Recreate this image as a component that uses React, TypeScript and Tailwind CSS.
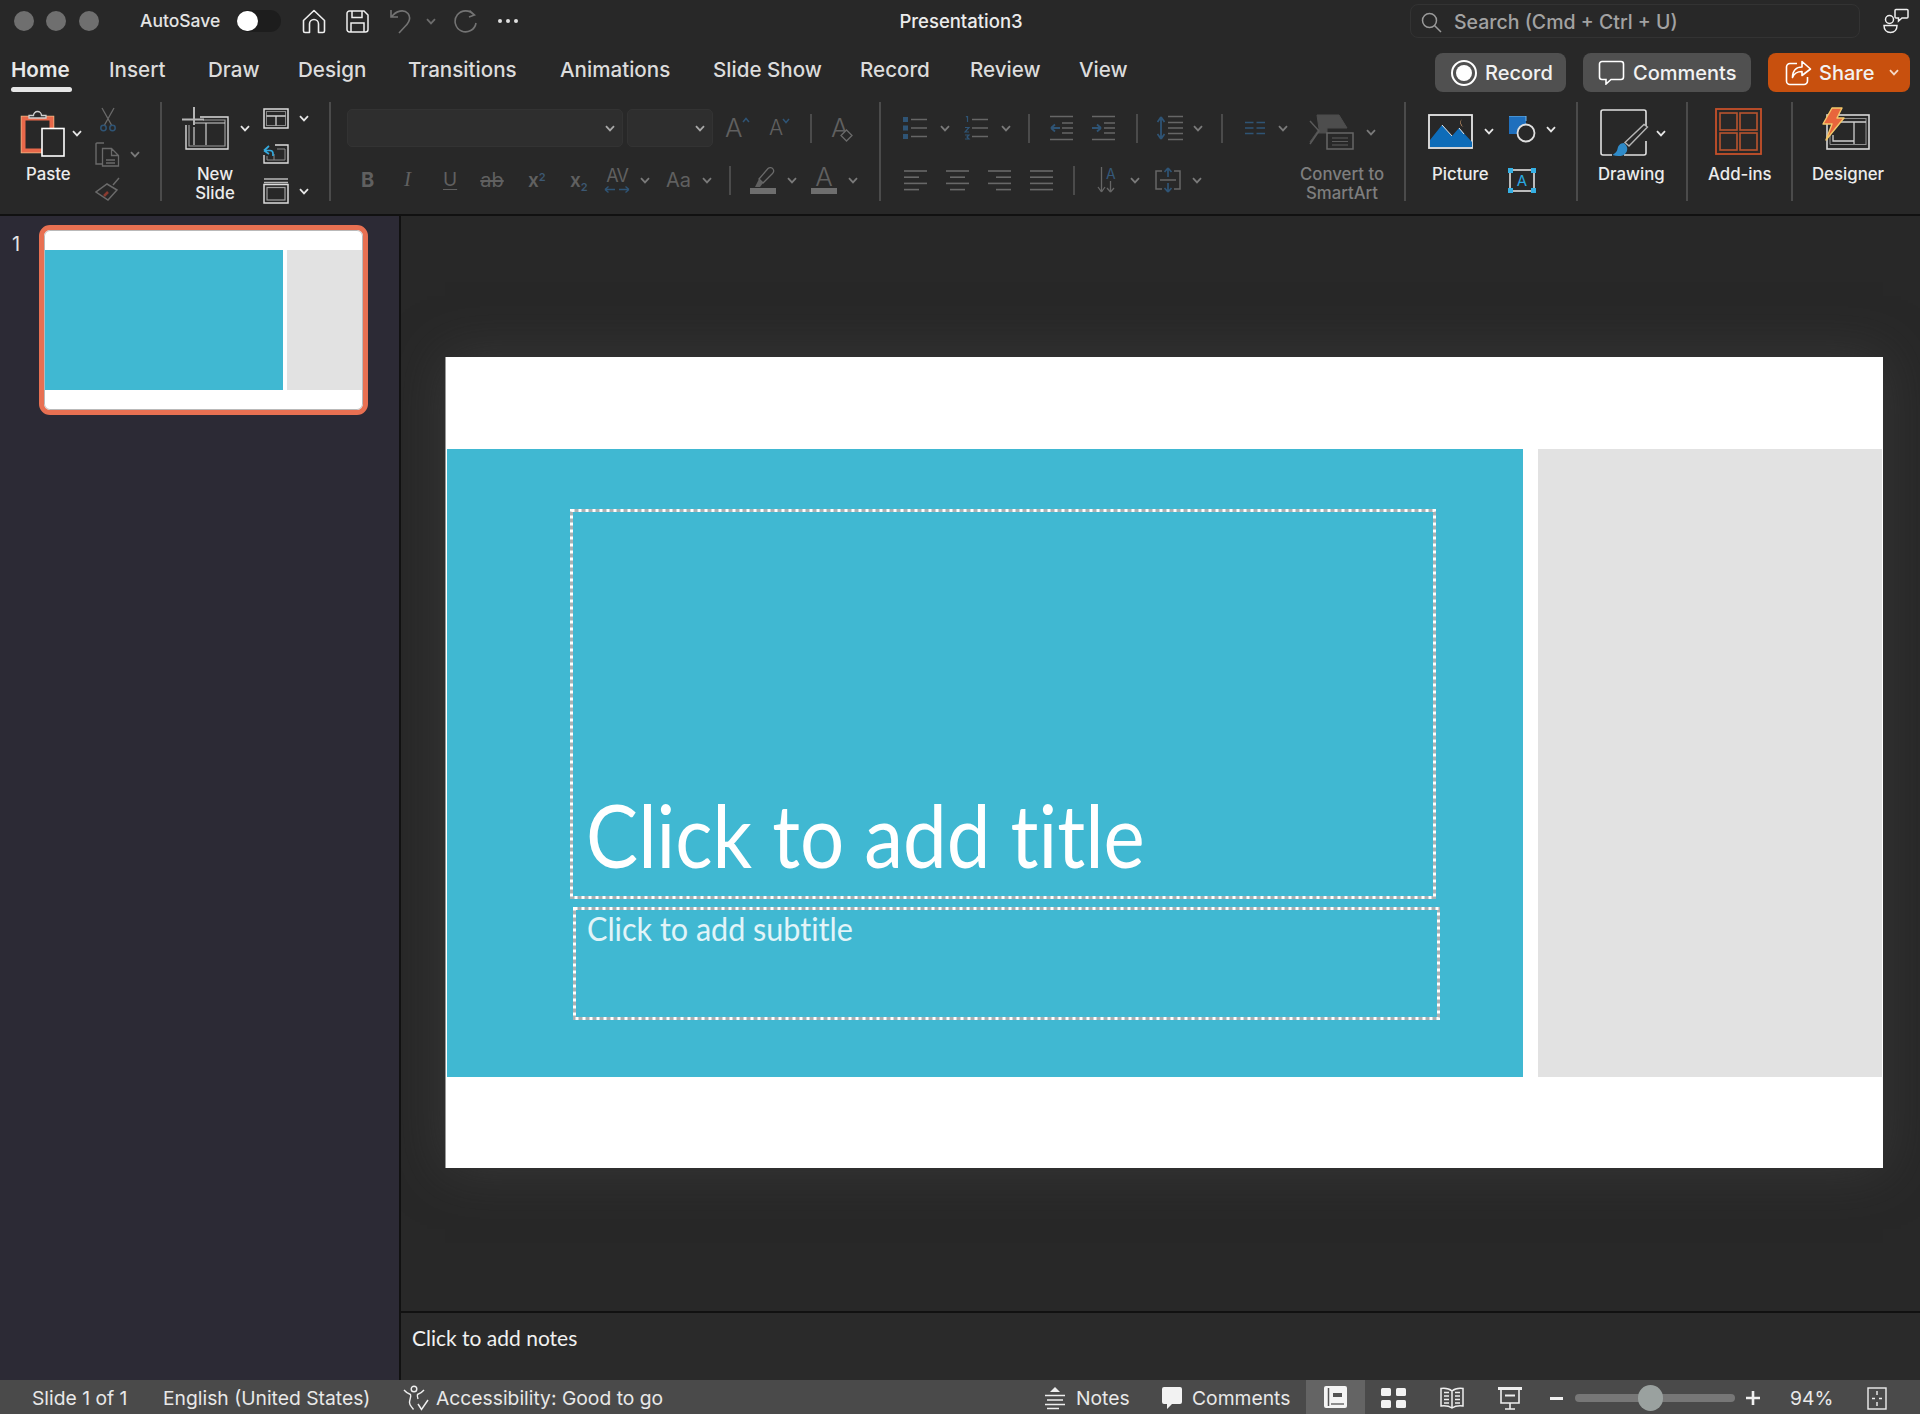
import type { ReactNode } from "react"

function S({ w, h, className = "", children }: { w: number; h: number; className?: string; children: ReactNode }) {
  return (
    <svg width={w} height={h} viewBox={`0 0 ${w} ${h}`} fill="none" className={`block shrink-0 ${className}`}>
      {children}
    </svg>
  )
}

function Chev({ color = "#e6e6e6", className = "" }: { color?: string; className?: string }) {
  return (
    <S w={10} h={7} className={className}>
      <path d="M1 1.2 5 5.4 9 1.2" stroke={color} strokeWidth="1.8" />
    </S>
  )
}

const DIM = "#6a6a6a"
const BLUE = "#2f5475"

function Sep() {
  return <div className="w-[2px] h-[99px] mt-[2px] bg-[#4b4b4b] shrink-0" />
}

function MiniSep({ className = "" }: { className?: string }) {
  return <div className={`w-[2px] h-[29px] bg-[#4b4b4b] shrink-0 ${className}`} />
}

function Lines({ rows, w = 23 }: { rows: [number, number][]; w?: number }) {
  return (
    <S w={w} h={23}>
      {rows.map(([a, b], i) => (
        <path key={i} d={`M${a} ${2 + i * 6.2}H${b}`} stroke="#686868" strokeWidth="1.6" />
      ))}
    </S>
  )
}

function Dashed({ className = "", children }: { className?: string; children?: ReactNode }) {
  return (
    <div className={`relative ${className}`}>
      <svg className="absolute inset-0 w-full h-full overflow-visible" fill="none">
        <rect x="1.5" y="1.5" stroke="#a9b0b3" strokeWidth="3" className="[width:calc(100%-3px)] [height:calc(100%-3px)]" />
        <rect x="1.5" y="1.5" stroke="#ffffff" strokeWidth="3" strokeDasharray="3 4" className="[width:calc(100%-3px)] [height:calc(100%-3px)]" />
      </svg>
      {children}
    </div>
  )
}

const tabs = [
  { t: "Home", c: "w-[60px] ml-[11px] font-semibold text-[#e9e9e9]" },
  { t: "Insert", c: "w-[58px] ml-[38px]" },
  { t: "Draw", c: "w-[50px] ml-[41px]" },
  { t: "Design", c: "w-[68px] ml-[40px]" },
  { t: "Transitions", c: "w-[108px] ml-[42px]" },
  { t: "Animations", c: "w-[111px] ml-[44px]" },
  { t: "Slide Show", c: "w-[108px] ml-[42px]" },
  { t: "Record", c: "w-[71px] ml-[39px]" },
  { t: "Review", c: "w-[70px] ml-[39px]" },
  { t: "View", c: "w-[48px] ml-[39px]" },
]

function TitleBar() {
  return (
    <div className="flex items-center h-[42px] mb-[4px] text-[#e4e4e4]">
      <div className="ml-[14px] w-[20px] h-[20px] rounded-full bg-[#6f6f6f]" />
      <div className="ml-[12px] w-[20px] h-[20px] rounded-full bg-[#6f6f6f]" />
      <div className="ml-[13px] w-[20px] h-[20px] rounded-full bg-[#6f6f6f]" />
      <span className="ml-[41px] w-[80px] text-[17.5px] font-medium whitespace-nowrap">AutoSave</span>
      <div className="ml-[17px] w-[44px] h-[22px] rounded-full bg-[#1d1d1d] flex items-center">
        <div className="w-[21px] h-[20px] rounded-full bg-white" />
      </div>
      <S w={24} h={25} className="ml-[21px]">
        <path d="M1.5 11.5 12 1.5l10.5 10V22a1.5 1.5 0 0 1-1.5 1.5h-4.5V15a4.5 4.5 0 0 0-9 0v8.5H3A1.5 1.5 0 0 1 1.5 22Z" stroke="#eee" strokeWidth="1.6" strokeLinejoin="round" />
      </S>
      <S w={23} h={23} className="ml-[20px]">
        <path d="M1 3.5A2.5 2.5 0 0 1 3.500 1H18l4 4v14.500A2.500 2.500 0 0 1 19.500 22h-16A2.500 2.500 0 0 1 1 19.500Z" stroke="#eee" strokeWidth="1.500" />
        <path d="M6 1v6.500h10V1M5 22v-9h13v9" stroke="#eee" strokeWidth="1.500" />
      </S>
      <S w={22} h={26} className="ml-[21px]">
        <path d="M1 2v7h7M1.500 9C6 2.500 14 1 18 5.500c3.500 4.500 1 9-3 13l-6 6.500" stroke="#737373" strokeWidth="1.600" />
      </S>
      <Chev color="#6c6c6c" className="ml-[14px]" />
      <S w={23} h={25} className="ml-[18px]">
        <path d="M20 6A10.500 10.500 0 1 0 22 14M15.500 1.500l5 4.500-5.500 2" stroke="#737373" strokeWidth="1.600" />
      </S>
      <div className="ml-[21px] flex gap-[4px]">
        <div className="w-[4px] h-[4px] rounded-full bg-[#e0e0e0]" />
        <div className="w-[4px] h-[4px] rounded-full bg-[#e0e0e0]" />
        <div className="w-[4px] h-[4px] rounded-full bg-[#e0e0e0]" />
      </div>
      <span className="ml-[380px] mt-[2px] w-[126px] text-center text-[18.5px] font-medium whitespace-nowrap text-[#ececec]">Presentation3</span>
      <div className="ml-[386px] w-[450px] h-[34px] rounded-[8px] border border-[#333] flex items-center">
        <S w={21} h={21} className="ml-[10px] mt-[2px]">
          <circle cx="8.500" cy="8.500" r="7" stroke="#9a9a9a" strokeWidth="1.500" />
          <path d="m13.500 13.500 6.500 6.500" stroke="#9a9a9a" strokeWidth="1.500" />
        </S>
        <span className="ml-[12px] mt-[3px] text-[19.5px] font-medium text-[#a2a2a2] whitespace-nowrap">Search (Cmd + Ctrl + U)</span>
      </div>
      <S w={26} h={26} className="ml-[23px]">
        <circle cx="6.500" cy="11.500" r="4" stroke="#eee" strokeWidth="1.500" />
        <path d="M1 17.500h13c0 4-2.500 7-6.500 7s-6.500-3-6.500-7Z" stroke="#eee" strokeWidth="1.500" />
        <path d="M13 1.500h11a1 1 0 0 1 1 1v6.500a1 1 0 0 1-1 1h-5l-3.500 3v-3H13a1 1 0 0 1-1-1V2.500a1 1 0 0 1 1-1Z" stroke="#eee" strokeWidth="1.500" />
      </S>
    </div>
  )
}

function TabRow() {
  return (
    <div className="flex h-[54px] text-[20.6px] font-medium text-[#dcdcdc]">
      {tabs.map((tab) => (
        <div key={tab.t} className={`mt-[11px] whitespace-nowrap leading-[26px] h-[26px] ${tab.c}`}>
          {tab.t}
          {tab.t === "Home" && <div className="mt-[4px] h-[5px] w-[61px] rounded-full bg-[#e6e6e6]" />}
        </div>
      ))}
      <div className="ml-auto mt-[7px] mr-[10px] flex gap-[17px] h-[39px] text-[20px] text-[#f2f2f2]">
        <div className="w-[131px] rounded-[8px] bg-[#505050] flex items-center">
          <div className="ml-[16px] w-[26px] h-[26px] rounded-full border-2 border-white flex items-center justify-center">
            <div className="w-[16px] h-[16px] rounded-full bg-white" />
          </div>
          <span className="ml-[8px]">Record</span>
        </div>
        <div className="w-[168px] rounded-[8px] bg-[#505050] flex items-center">
          <S w={27} h={25} className="ml-[15px]">
            <path d="M4 1.500h19A2.500 2.500 0 0 1 25.500 4v13a2.500 2.500 0 0 1-2.500 2.500H13l-5 4.500v-4.500H4A2.500 2.500 0 0 1 1.500 17V4A2.500 2.500 0 0 1 4 1.500Z" stroke="#fff" strokeWidth="1.600" />
          </S>
          <span className="ml-[8px]">Comments</span>
        </div>
        <div className="w-[142px] rounded-[8px] bg-[#c8500e] flex items-center">
          <S w={27} h={26} className="ml-[17px]">
            <path d="M12 3.500H5A3.500 3.500 0 0 0 1.500 7v14A3.500 3.500 0 0 0 5 24.500h14a3.500 3.500 0 0 0 3.500-3.500v-4" stroke="#fff" strokeWidth="1.600" />
            <path d="M17 1.500 25.500 9 17 15.500V11.500c-5 0-8 2-9.500 6 0-7 4-10.500 9.500-10.500Z" stroke="#fff" strokeWidth="1.600" strokeLinejoin="round" />
          </S>
          <span className="ml-[7px]">Share</span>
          <Chev color="#f5d9c8" className="ml-[14px] w-[12px]" />
        </div>
      </div>
    </div>
  )
}

function Label({ className = "", children }: { className?: string; children: ReactNode }) {
  return <div className={`text-[16.8px] leading-[19px] font-medium text-[#ececec] whitespace-nowrap ${className}`}>{children}</div>
}

function ClipboardGroup() {
  return (
    <div className="flex w-[160px] shrink-0">
      <div className="w-[90px]">
        <div className="flex items-center mt-[10px] ml-[20px]">
          <S w={45} h={47}>
            <rect x="1.500" y="6.500" width="32" height="36" stroke="#f0bb86" strokeWidth="1.500" />
            <rect x="3.500" y="8.500" width="28" height="32" stroke="#e8684a" strokeWidth="4" />
            <path d="M9 8V5.500h4.500a4 4 0 0 1 8 0H26V8Z" fill="#282828" stroke="#cfcfcf" strokeWidth="1.300" />
            <rect x="22" y="18.500" width="22" height="27.500" fill="#282828" stroke="#fff" strokeWidth="1.600" />
          </S>
          <Chev className="ml-[7px]" />
        </div>
        <Label className="ml-[26px] mt-[8px]">Paste</Label>
      </div>
      <div className="ml-[5px]">
        <S w={16} h={25} className="ml-[5px] mt-[7px]">
          <path d="M2 1 11.500 18M14 1 4.500 18" stroke={DIM} strokeWidth="1.300" />
          <circle cx="3.500" cy="21" r="2.700" stroke={BLUE} strokeWidth="1.500" />
          <circle cx="12.500" cy="21" r="2.700" stroke={BLUE} strokeWidth="1.500" />
        </S>
        <div className="flex items-center mt-[10px]">
          <S w={25} h={25}>
            <path d="M9 1H2a1 1 0 0 0-1 1v20h6" stroke={DIM} strokeWidth="1.400" />
            <path d="M7.500 6.500h9l7 7v10.500h-16ZM16.500 6.500v7h7M11 18h9M11 21h9" stroke={DIM} strokeWidth="1.300" />
          </S>
          <Chev color="#7a7a7a" className="ml-[10px]" />
        </div>
        <S w={25} h={24} className="mt-[10px]">
          <path d="M24 1l-6 7M12 7l10 6-9 10L1 15Z" stroke={DIM} strokeWidth="1.500" />
          <path d="M9 19l4-4" stroke="#8a3b30" strokeWidth="2.500" />
        </S>
      </div>
    </div>
  )
}

function SlidesGroup() {
  return (
    <div className="flex w-[167px] shrink-0">
      <div className="w-[94px]">
        <div className="flex items-center mt-[7px] ml-[20px]">
          <S w={47} h={43}>
            <path d="M18 10H46V42H4V18" stroke="#dadada" strokeWidth="1.400" />
            <path d="M7 18V39H43V13H21M7 23" stroke="#9b9b9b" strokeWidth="1.200" />
            <path d="M24 16V38M12 20V38M12 16H43" stroke="#cfcfcf" strokeWidth="1.200" />
            <path d="M12 0V18M0 12.500H22" stroke="#b5b5b5" strokeWidth="2" />
          </S>
          <Chev className="ml-[11px]" />
        </div>
        <Label className="ml-[20px] w-[66px] mt-[15px] text-center">
          New
          <br />
          Slide
        </Label>
      </div>
      <div className="ml-[7px]">
        <div className="flex items-center mt-[8px]">
          <S w={26} h={21}>
            <rect x="1" y="1" width="24" height="19" stroke="#dcdcdc" strokeWidth="1.500" />
            <rect x="3.500" y="3.500" width="19" height="14" stroke="#888" strokeWidth="1" />
            <path d="M3.500 8H22.500M13 8V17.500" stroke="#d0d0d0" strokeWidth="1.300" />
          </S>
          <Chev className="ml-[10px]" />
        </div>
        <S w={26} h={21} className="mt-[14px]">
          <path d="M12 2H25V20H1V12" stroke="#dcdcdc" strokeWidth="1.400" />
          <path d="M14 6H22V17H4V13M11 11V17" stroke="#8b8b8b" strokeWidth="1" />
          <path d="M1 7.500 6 3M1 7.500 6 11M1.500 7.500H7a3 3 0 0 1 3 3V13" stroke="#35a9dc" strokeWidth="1.700" />
        </S>
        <div className="flex items-center mt-[14px]">
          <S w={26} h={26}>
            <path d="M1 1H25M1 4.500H25" stroke="#b8b8b8" strokeWidth="1.500" />
            <rect x="1" y="6.500" width="24" height="18.500" stroke="#dcdcdc" strokeWidth="1.500" />
            <rect x="4" y="9.500" width="18" height="12.500" stroke="#a0a0a0" strokeWidth="1.200" />
          </S>
          <Chev className="ml-[10px]" />
        </div>
      </div>
    </div>
  )
}

function FontGroup() {
  return (
    <div className="w-[548px] shrink-0 mt-[9px] text-[#606060]">
      <div className="flex items-center h-[38px]">
        <div className="ml-[16px] w-[276px] h-[38px] rounded-[5px] bg-[#2e2e2e] border border-[#333] flex items-center justify-end pr-[7px]">
          <Chev color="#a8a8a8" />
        </div>
        <div className="ml-[4px] w-[86px] h-[38px] rounded-[5px] bg-[#2e2e2e] border border-[#333] flex items-center justify-end pr-[7px]">
          <Chev color="#a8a8a8" />
        </div>
        <div className="ml-[12px] w-[24px] flex items-start">
          <span className="text-[26px] leading-[30px] font-light">A</span>
          <S w={8} h={6} className="-ml-[1px] mt-[4px]"><path d="M1 5 4 1.500 7 5" stroke={BLUE} strokeWidth="1.500" /></S>
        </div>
        <div className="ml-[20px] w-[22px] flex items-start">
          <span className="text-[21px] leading-[30px] font-light">A</span>
          <S w={8} h={6} className="-ml-[1px] mt-[5px]"><path d="M1 1 4 4.500 7 1" stroke={BLUE} strokeWidth="1.500" /></S>
        </div>
        <MiniSep className="ml-[19px]" />
        <div className="ml-[19px] w-[25px] flex items-start">
          <span className="text-[26px] leading-[30px] font-light">A</span>
          <S w={13} h={13} className="-ml-[9px] mt-[16px]"><path d="M6.500 1 12 6.500 6.500 12 1 6.500Z" stroke="#6a6a6a" strokeWidth="1.300" fill="#282828" /></S>
        </div>
      </div>
      <div className="flex items-center h-[38px] mt-[14px]">
        <span className="ml-[30px] w-[11px] text-[20px] font-bold">B</span>
        <span className="ml-[32px] w-[9px] text-[21px] italic font-['Liberation_Serif',serif]">I</span>
        <span className="ml-[30px] w-[13px] text-[19px] underline underline-offset-[3px]">U</span>
        <span className="ml-[24px] w-[24px] text-[20px] text-center line-through">ab</span>
        <span className="ml-[24px] w-[17px] text-[19px] font-semibold leading-none">x<sup className="text-[11px] text-[#3c5873] -top-[6px]">2</sup></span>
        <span className="ml-[25px] w-[18px] text-[19px] font-semibold leading-none">x<sub className="text-[11px] text-[#3c5873] -bottom-[4px]">2</sub></span>
        <div className="ml-[16px] w-[26px] flex flex-col items-center">
          <span className="text-[18px] leading-[19px] tracking-[-1px]">AV</span>
          <S w={26} h={9}><path d="M1 4.500H11M1 4.500 4.500 1.500M1 4.500 4.500 7.500M15 4.500H25M25 4.500 21.500 1.500M25 4.500 21.500 7.500" stroke={BLUE} strokeWidth="1.400" /></S>
        </div>
        <Chev color="#7a7a7a" className="ml-[10px]" />
        <span className="ml-[16px] w-[26px] text-[20px]">Aa</span>
        <Chev color="#7a7a7a" className="ml-[10px]" />
        <MiniSep className="ml-[17px]" />
        <S w={26} h={28} className="ml-[19px]">
          <path d="M9 13 18 2.500c1.500-1.500 4-1 5 .5s1 3-.5 4.500L13 17Z" stroke="#6a6a6a" strokeWidth="1.300" />
          <path d="M9 13 5 21h5l3-4Z" fill="#606060" />
          <rect x="0" y="22" width="26" height="6" fill="#6e6e6e" />
        </S>
        <Chev color="#7a7a7a" className="ml-[11px]" />
        <div className="ml-[14px] w-[26px] h-[28px] flex flex-col items-center">
          <span className="text-[26px] leading-[22px] font-light">A</span>
          <div className="w-[26px] h-[6px] bg-[#6e6e6e] mt-auto" />
        </div>
        <Chev color="#7a7a7a" className="ml-[11px]" />
      </div>
    </div>
  )
}

function ParagraphGroup() {
  return (
    <div className="flex w-[523px] shrink-0">
      <div className="w-[419px] mt-[9px]">
        <div className="flex items-center h-[38px]">
          <S w={24} h={24} className="ml-[22px]">
            <rect x="0" y="1" width="5" height="5" fill={BLUE} /><rect x="0" y="9.500" width="5" height="5" fill={BLUE} /><rect x="0" y="18" width="5" height="5" fill={BLUE} />
            <path d="M8 3.500H24M8 12H24M8 20.500H24" stroke="#666" strokeWidth="1.500" />
          </S>
          <Chev color="#7a7a7a" className="ml-[13px]" />
          <S w={24} h={24} className="ml-[14px]">
            <path d="M2 1 3.500 0V6M1 11.500H5L1 16H5M1 19H5L3 21 5 23H1" stroke={BLUE} strokeWidth="1.200" />
            <path d="M8 3.500H24M8 12H24M8 20.500H24" stroke="#666" strokeWidth="1.500" />
          </S>
          <Chev color="#7a7a7a" className="ml-[13px]" />
          <MiniSep className="ml-[17px]" />
          <S w={23} h={26} className="ml-[20px]">
            <path d="M0 1.500H23M12 8H23M12 13H23M12 18H23M0 24.500H23" stroke="#666" strokeWidth="1.500" />
            <path d="M10 13H1M1 13 5 9.500M1 13 5 16.500" stroke={BLUE} strokeWidth="1.800" />
          </S>
          <S w={23} h={26} className="ml-[19px]">
            <path d="M0 1.500H23M12 8H23M12 13H23M12 18H23M0 24.500H23" stroke="#666" strokeWidth="1.500" />
            <path d="M0 13H9M9 13 5 9.500M9 13 5 16.500" stroke={BLUE} strokeWidth="1.800" />
          </S>
          <MiniSep className="ml-[21px]" />
          <S w={26} h={26} className="ml-[19px]">
            <path d="M4 2V24M4 2 .5 7M4 2 7.500 7M4 24 .5 19M4 24 7.500 19" stroke={BLUE} strokeWidth="1.800" />
            <path d="M11 1.500H26M11 7.500H26M11 13H26M11 18.500H26M11 24.500H26" stroke="#666" strokeWidth="1.500" />
          </S>
          <Chev color="#7a7a7a" className="ml-[10px]" />
          <MiniSep className="ml-[18px]" />
          <S w={20} h={14} className="ml-[22px]">
            <path d="M0 1.500H8.500M11.500 1.500H20M0 7H8.500M11.500 7H20M0 12.500H8.500M11.500 12.500H20" stroke={BLUE} strokeWidth="1.700" />
          </S>
          <Chev color="#7a7a7a" className="ml-[13px]" />
        </div>
        <div className="flex items-center h-[38px] mt-[14px]">
          <div className="ml-[23px]"><Lines rows={[[0, 23], [0, 15], [0, 23], [0, 15]]} /></div>
          <div className="ml-[19px]"><Lines rows={[[0, 23], [4, 19], [0, 23], [4, 19]]} /></div>
          <div className="ml-[19px]"><Lines rows={[[0, 23], [8, 23], [0, 23], [8, 23]]} /></div>
          <div className="ml-[19px]"><Lines rows={[[0, 23], [0, 23], [0, 23], [0, 23]]} /></div>
          <MiniSep className="ml-[20px]" />
          <div className="ml-[22px] w-[21px] h-[26px] flex">
            <S w={9} h={26}><path d="M4.500 0V25M4.500 25 1 20M4.500 25 8 20" stroke="#666" strokeWidth="1.300" /></S>
            <div className="flex flex-col items-center">
              <span className="text-[14px] leading-[14px] text-[#35597a]">A</span>
              <S w={9} h={12}><path d="M4.500 0V11M4.500 11 1 7M4.500 11 8 7" stroke="#666" strokeWidth="1.300" /></S>
            </div>
          </div>
          <Chev color="#7a7a7a" className="ml-[12px]" />
          <S w={26} h={26} className="ml-[15px]">
            <path d="M7 4H1V22H7M19 4H25V22H19" stroke="#666" strokeWidth="1.500" />
            <path d="M5 13H21" stroke="#666" strokeWidth="1.500" />
            <path d="M13 1V10M13 1 9.500 5M13 1 16.500 5M13 16V25M13 25 9.500 21M13 25 16.500 21" stroke={BLUE} strokeWidth="1.700" />
          </S>
          <Chev color="#7a7a7a" className="ml-[11px]" />
        </div>
      </div>
      <div className="w-[104px]">
        <div className="flex items-center mt-[14px] ml-[9px]">
          <S w={45} h={36}>
            <path d="M8 1H30L38 14H18V19H8L1 28 10 15Z" fill="#4d4d4d" stroke="#4d4d4d" />
            <path d="M1 30 10 17 1 7" stroke="#5a5a5a" strokeWidth="1.500" />
            <rect x="18" y="19" width="26" height="16" fill="#282828" stroke="#666" strokeWidth="1.500" />
            <path d="M23 24H39M23 27.500H39M23 31H39" stroke="#5c5c5c" strokeWidth="1.200" />
          </S>
          <Chev color="#7a7a7a" className="ml-[12px]" />
        </div>
        <Label className="mt-[15px] w-[84px] text-center !text-[#7e7e7e]">
          Convert to
          <br />
          SmartArt
        </Label>
      </div>
    </div>
  )
}

function InsertGroup() {
  return (
    <div className="flex w-[170px] shrink-0">
      <div className="w-[100px]">
        <div className="flex items-center mt-[14px] ml-[22px]">
          <S w={45} h={35}>
            <rect x="1" y="1" width="43" height="33" stroke="#e6e6e6" strokeWidth="1.800" fill="#282828" />
            <path d="M2 33V26L14 11 24 22 31 14 44 28V33Z" fill="#0e6cb8" />
            <path d="M14 11 24 22M31 14 36 20" stroke="#e6e6e6" strokeWidth="1" />
            <path d="M34 5a4.500 4.500 0 0 0 2 8 5 5 0 0 1-2-8Z" fill="#f2b37a" />
          </S>
          <Chev className="ml-[11px]" />
        </div>
        <Label className="ml-[26px] mt-[16px]">Picture</Label>
      </div>
      <div className="ml-[3px]">
        <div className="flex items-center mt-[16px]">
          <S w={27} h={27}>
            <rect x="0" y="0" width="17" height="18" fill="#1f6fbd" />
            <path d="M0 0H17V5" stroke="#6eb6ea" strokeWidth="1" />
            <circle cx="17" cy="17" r="8.500" fill="#282828" stroke="#e0e0e0" strokeWidth="1.800" />
          </S>
          <Chev className="ml-[10px]" />
        </div>
        <div className="relative mt-[26px] w-[26px] h-[23px] flex items-center justify-center border-2 border-[#bbb] text-[15px] leading-none text-[#2aa8e0]">
          A
          <div className="absolute -left-[3px] -top-[3px] w-[5px] h-[5px] bg-[#35b0e4]" />
          <div className="absolute -right-[3px] -top-[3px] w-[5px] h-[5px] bg-[#35b0e4]" />
          <div className="absolute -left-[3px] -bottom-[3px] w-[5px] h-[5px] bg-[#35b0e4]" />
          <div className="absolute -right-[3px] -bottom-[3px] w-[5px] h-[5px] bg-[#35b0e4]" />
        </div>
      </div>
    </div>
  )
}

function DrawingGroup() {
  return (
    <div className="w-[108px] shrink-0">
      <div className="flex items-center mt-[9px] ml-[22px]">
        <S w={49} h={48}>
          <path d="M46 18V3a2 2 0 0 0-2-2H3a2 2 0 0 0-2 2v41a2 2 0 0 0 2 2h9M24 46H44a2 2 0 0 0 2-2V32" stroke="#e0e0e0" strokeWidth="1.600" />
          <path d="M47.500 18 29 37l-4-3.500L44 15.500Z" stroke="#b5b5b5" strokeWidth="1.400" fill="#282828" />
          <path d="M24 34c-4 0-6 3-6.500 6-.5 2.500-2 4-5 6 5 2 12 1.500 14-3 1.500-3 1-6-2.500-9Z" fill="#2f8bc9" />
        </S>
        <Chev className="ml-[7px]" />
      </div>
      <Label className="ml-[20px] mt-[8px]">Drawing</Label>
    </div>
  )
}

function AddinsGroup() {
  return (
    <div className="w-[103px] shrink-0">
      <S w={47} h={47} className="ml-[27px] mt-[8px]">
        <rect x="1" y="1" width="45" height="45" stroke="#c6502a" strokeWidth="1.800" />
        <rect x="5" y="5" width="17" height="17" stroke="#b9542f" strokeWidth="1.600" />
        <rect x="25" y="5" width="17" height="17" stroke="#b9542f" strokeWidth="1.600" />
        <rect x="5" y="25" width="17" height="17" stroke="#b9542f" strokeWidth="1.600" />
        <rect x="25" y="25" width="17" height="17" stroke="#b9542f" strokeWidth="1.600" />
      </S>
      <Label className="ml-[20px] mt-[10px]">Add-ins</Label>
    </div>
  )
}

function DesignerGroup() {
  return (
    <div className="flex-1">
      <S w={48} h={44} className="ml-[29px] mt-[7px]">
        <rect x="5" y="8" width="42" height="34" stroke="#d8d8d8" strokeWidth="1.600" />
        <path d="M8 37.500H44V11.500H19M8 27V37.500" stroke="#8e8e8e" strokeWidth="1.100" />
        <path d="M15 15H44M32 15V37M11 28V34H32" stroke="#cfcfcf" strokeWidth="1.300" />
        <path d="M10 1H20L15 11H22L4 33 10 17H1Z" fill="#e8653c" stroke="#f4c86a" strokeWidth="1.400" strokeLinejoin="round" />
      </S>
      <Label className="ml-[19px] mt-[14px]">Designer</Label>
    </div>
  )
}

function Ribbon() {
  return (
    <div className="flex h-[116px] border-b-2 border-[#111]">
      <ClipboardGroup />
      <Sep />
      <SlidesGroup />
      <Sep />
      <FontGroup />
      <Sep />
      <ParagraphGroup />
      <Sep />
      <InsertGroup />
      <Sep />
      <DrawingGroup />
      <Sep />
      <AddinsGroup />
      <Sep />
      <DesignerGroup />
    </div>
  )
}

function Sidebar() {
  return (
    <div className="w-[399px] shrink-0 bg-[#2c2a35] flex items-start">
      <span className="ml-[12px] mt-[16px] w-[27px] text-[20px] leading-[24px] text-[#e4e4e4]">1</span>
      <div className="mt-[9px] w-[329px] h-[190px] rounded-[11px] border-[5px] border-[#e87052] bg-white overflow-hidden">
        <div className="h-full rounded-[6px] border border-[#b9b9b9]">
          <div className="flex h-[140px] mt-[19px] gap-[4px]">
            <div className="w-[238px] bg-[#40b8d2]" />
            <div className="flex-1 bg-[#e2e2e2]" />
          </div>
        </div>
      </div>
    </div>
  )
}

function Slide() {
  return (
    <div className="ml-[44px] mt-[141px] w-[1438px] h-[811px] bg-white pt-[92px] flex gap-[15px] shadow-[0_0_50px_rgba(70,70,70,0.55)] border-l border-[#999]">
      <div className="ml-[1px] w-[1076px] h-[628px] bg-[#40b8d2] pt-[60px] font-['Lato',sans-serif] [font-variant-ligatures:none]">
        <Dashed className="ml-[123px] w-[866px] h-[390px] flex items-end">
          <span className="ml-[16px] mb-[12px] text-[88px] leading-[106px] text-white whitespace-nowrap origin-left scale-x-[0.887]">Click to add title</span>
        </Dashed>
        <Dashed className="ml-[126px] mt-[8px] w-[867px] h-[113px]">
          <div className="ml-[14px] pt-[4px] text-[32.5px] leading-[36px] text-white/85 whitespace-nowrap origin-left scale-x-[0.94]">Click to add subtitle</div>
        </Dashed>
      </div>
      <div className="w-[344px] h-[628px] bg-[#e2e2e2]" />
    </div>
  )
}

function StatusBar() {
  return (
    <div className="flex items-center h-[34px] pt-[2px] bg-[#4a4a4a] text-[19.3px] text-[#e8e8e8] whitespace-nowrap">
      <span className="ml-[32px] w-[97px]">Slide 1 of 1</span>
      <span className="ml-[34px] w-[207px]">English (United States)</span>
      <S w={26} h={26} className="ml-[33px]">
        <circle cx="11" cy="4" r="2.800" stroke="#eee" strokeWidth="1.400" />
        <path d="M1 5c2.500 3 5 4 6.500 4.500 1 2-1 5-1 8 0 3 2 4 4 7M21 5c-2.500 3-5 4-6.500 4.500-.5 1.500 0 3 .5 4.500" stroke="#eee" strokeWidth="1.400" />
        <path d="M15 19 18.500 24.500 25 15" stroke="#eee" strokeWidth="1.500" />
      </S>
      <span className="ml-[7px] w-[224px]">Accessibility: Good to go</span>
      <S w={22} h={24} className="ml-[384px]">
        <path d="M11 1 16 6H6Z" fill="#eee" />
        <path d="M1 9.500H21M3 14H19M1 18.500H21M3 22.500H15" stroke="#eee" strokeWidth="1.600" />
      </S>
      <span className="ml-[10px] w-[52px]">Notes</span>
      <S w={22} h={24} className="ml-[33px]">
        <path d="M1 3a2 2 0 0 1 2-2h16a2 2 0 0 1 2 2v13a2 2 0 0 1-2 2H11l-5 5v-5H3a2 2 0 0 1-2-2Z" fill="#f2f2f2" />
      </S>
      <span className="ml-[9px] w-[97px]">Comments</span>
      <div className="ml-[17px] w-[59px] h-[34px] -mt-[2px] bg-[#646464] flex items-center justify-center">
        <S w={23} h={22}>
          <path d="M0 2a2 2 0 0 1 2-2h19a2 2 0 0 1 2 2v18a2 2 0 0 1-2 2H2a2 2 0 0 1-2-2Z" fill="#f4f4f4" />
          <rect x="9" y="7" width="9" height="4" fill="#555" />
          <path d="M4.500 2V20" stroke="#555" strokeWidth="1.500" />
          <path d="M7 18H20" stroke="#555" strokeWidth="1.300" />
        </S>
      </div>
      <S w={25} h={20} className="ml-[16px]">
        <rect x="0" y="0" width="10" height="8" rx="1.500" fill="#f2f2f2" />
        <rect x="15" y="0" width="10" height="8" rx="1.500" fill="#f2f2f2" />
        <rect x="0" y="12" width="10" height="8" rx="1.500" fill="#f2f2f2" />
        <rect x="15" y="12" width="10" height="8" rx="1.500" fill="#f2f2f2" />
      </S>
      <S w={24} h={22} className="ml-[34px]">
        <path d="M12 4C9 1.500 5 1 1 1.500V19c4-.5 8 0 11 2 3-2 7-2.500 11-2V1.500C19 1 15 1.500 12 4ZM12 4V21" stroke="#eee" strokeWidth="1.500" />
        <path d="M4 5.500H9M4 9H9M4 12.500H9M4 16H9M15 5.500H20M15 9H20M15 12.500H20M15 16H20" stroke="#eee" strokeWidth="1.300" />
      </S>
      <S w={24} h={23} className="ml-[34px]">
        <path d="M0 1.500H24" stroke="#eee" strokeWidth="3" />
        <path d="M3 3V16H21V3M12 16V22M7 22H17" stroke="#eee" strokeWidth="1.600" />
        <path d="M7 8.500H17" stroke="#eee" strokeWidth="2" />
      </S>
      <div className="ml-[28px] w-[13px] h-[3px] bg-[#f0f0f0]" />
      <div className="relative ml-[12px] w-[160px] h-[8px] rounded-full bg-[#777]">
        <div className="absolute left-[63px] -top-[9px] w-[25px] h-[26px] rounded-full bg-[#9aa19f]" />
      </div>
      <S w={14} h={14} className="ml-[11px]">
        <path d="M7 0V14M0 7H14" stroke="#f0f0f0" strokeWidth="2.600" />
      </S>
      <span className="ml-[30px] w-[42px] text-center">94%</span>
      <S w={20} h={23} className="ml-[35px]">
        <rect x="1" y="1" width="18" height="21" stroke="#eee" strokeWidth="1.400" />
        <path d="M10 4V8M10 15V19M5 11.500H8M12 11.500H15" stroke="#eee" strokeWidth="1.400" />
      </S>
    </div>
  )
}

export default function App() {
  return (
    <div className="w-[1920px] h-[1414px] flex flex-col bg-[#282828] overflow-hidden font-['Inter',sans-serif]">
      <TitleBar />
      <TabRow />
      <Ribbon />
      <div className="flex flex-1 min-h-0">
        <Sidebar />
        <div className="w-[2px] bg-[#111] shrink-0" />
        <div className="flex-1 flex flex-col">
          <div className="flex-1 overflow-hidden">
            <Slide />
          </div>
          <div className="h-[69px] border-t-2 border-[#111] bg-[#2a2a2a] pl-[11px] pt-[12px] text-[21px] leading-[26px] text-[#f0f0f0] font-['Lato',sans-serif]">
            Click to add notes
          </div>
        </div>
      </div>
      <StatusBar />
    </div>
  )
}
